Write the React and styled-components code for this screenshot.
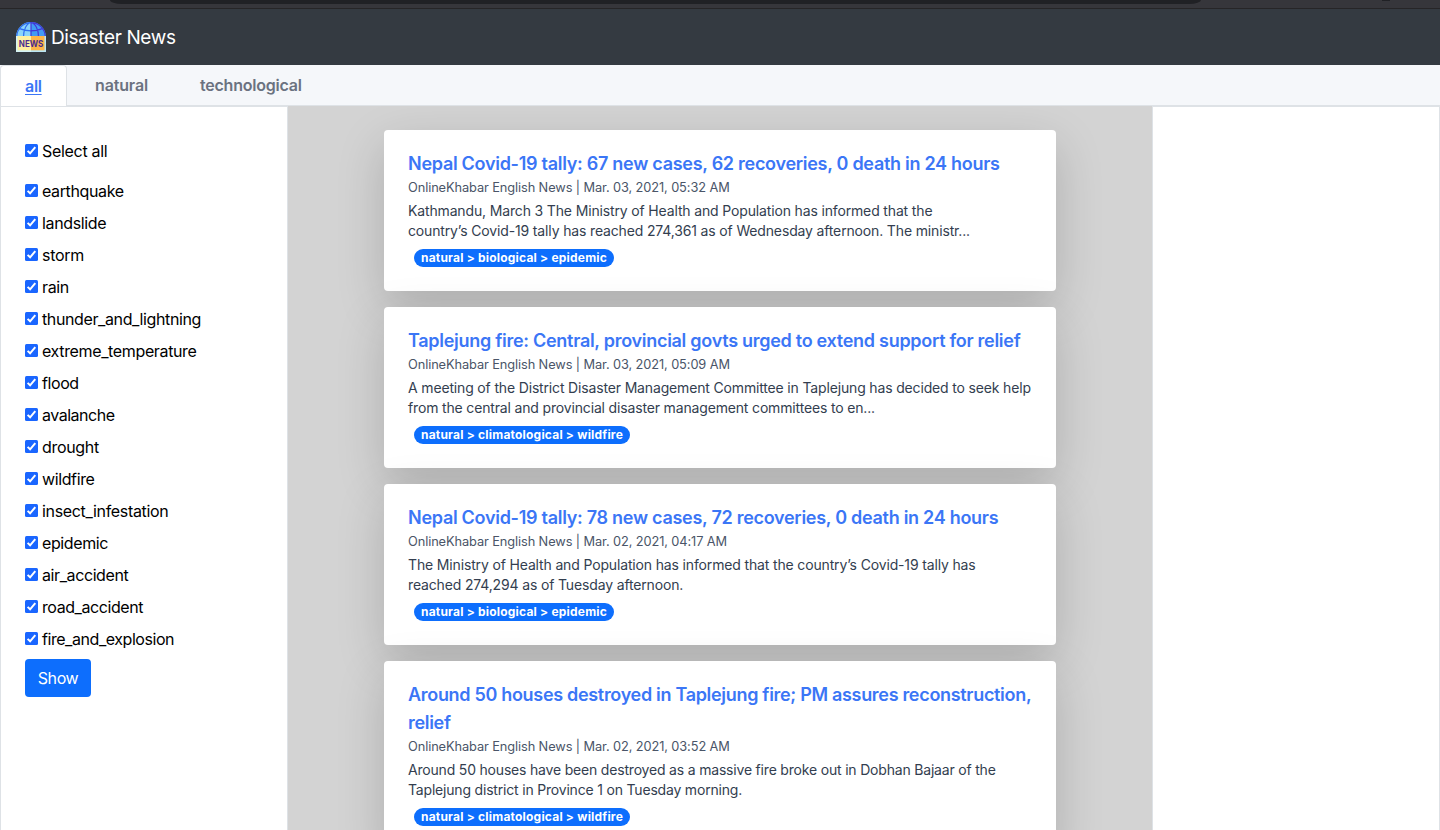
import React from "react";
import styled, { createGlobalStyle } from "styled-components";

const GlobalStyle = createGlobalStyle`
  *, *::before, *::after { box-sizing: border-box; }
  html, body { margin: 0; height: 100%; overflow: hidden; }
  body {
    font-family: Inter, "Liberation Sans", sans-serif;
    font-size: 16px;
    color: #000;
    background: #fff;
  }
`;

const Page = styled.div`
  display: flex;
  flex-direction: column;
  height: 830px;
  overflow: hidden;
`;

const BrowserStrip = styled.div`
  flex: none;
  display: flex;
  align-items: flex-start;
  justify-content: space-between;
  height: 9px;
  padding: 0 50px 0 110px;
  background: #36363b;
  border-bottom: 1px solid #262527;
`;

const AddressBar = styled.div`
  width: 1091px;
  height: 4px;
  background: #202125;
  border-radius: 0 0 12px 12px / 0 0 4px 4px;
`;

const ToolbarIconEdge = styled.div`
  width: 8px;
  height: 1px;
  background: #202125;
`;

const Navbar = styled.header`
  flex: none;
  display: flex;
  align-items: center;
  gap: 5px;
  height: 56px;
  padding: 0 16px;
  background: #343a41;
`;

const Brand = styled.span`
  color: #fff;
  font-size: 19px;
  letter-spacing: ${(p) => p.$ls};
  white-space: nowrap;
`;

const Tabs = styled.nav`
  flex: none;
  display: flex;
  height: 41px;
  background: #f5f7fa;
  border-bottom: 1px solid #dee2e6;
`;

const Tab = styled.a`
  display: flex;
  align-items: center;
  height: 40px;
  padding: 0 26px;
  color: #6b7280;
  font-size: 16px;
  font-weight: 600;
  white-space: nowrap;
  letter-spacing: ${(p) => p.$ls};
`;

const ActiveTab = styled(Tab)`
  width: 67px;
  height: 41px;
  margin-right: 2px;
  padding: 0 24px;
  color: #3b76f6;
  text-decoration: underline;
  text-underline-offset: 2px;
  background: #fff;
  border: 1px solid #dee2e6;
  border-bottom: 0;
  border-radius: 4px 4px 0 0;
`;

const Body = styled.main`
  flex: 1;
  min-height: 0;
  display: grid;
  grid-template-columns: 288px 864px 288px;
`;

const Side = styled.aside`
  padding: 28px 24px;
  background: #fff;
  border: 1px solid #dee2e6;
  border-bottom: 0;
`;

const Feed = styled.section`
  display: flex;
  flex-direction: column;
  gap: 16px;
  padding: 24px 96px;
  background: #d3d3d3;
  overflow: hidden;
`;

const Check = styled.label`
  display: flex;
  align-items: center;
  gap: 4px;
  height: 32px;
  margin-bottom: ${(p) => (p.$first ? "8px" : 0)};
  white-space: nowrap;
  letter-spacing: ${(p) => p.$ls};
`;

const Box = styled.svg`
  flex: none;
  display: block;
  width: 13px;
  height: 13px;
  margin-bottom: 2px;
`;

const ShowButton = styled.button`
  display: block;
  width: 66px;
  height: 38px;
  margin-top: 4px;
  padding: 0;
  color: #fff;
  font: 400 16px Inter, sans-serif;
  letter-spacing: -0.4px;
  background: #0d6efd;
  border: 0;
  border-radius: 4px;
`;

const Card = styled.article`
  flex: none;
  min-height: 161px;
  padding: 20px 24px 24px;
  background: #fff;
  border-radius: 4px;
  box-shadow: 0 16px 48px rgba(0, 0, 0, 0.175);
`;

const Title = styled.h2`
  margin: 0;
  color: #3b76f6;
  font-size: 18px;
  font-weight: 600;
  line-height: 28px;
  letter-spacing: ${(p) => p.$ls};
  white-space: nowrap;
`;

const Meta = styled.p`
  margin: 0;
  color: #4a5568;
  font-size: 12.8px;
  line-height: 19px;
  letter-spacing: ${(p) => p.$ls};
  white-space: nowrap;
`;

const Text = styled.p`
  margin: 4px 0 8px;
  color: #333e4f;
  font-size: 14px;
  line-height: 20px;
  letter-spacing: ${(p) => p.$ls};
  white-space: nowrap;
`;

const Badge = styled.span`
  display: flex;
  align-items: center;
  justify-content: center;
  width: ${(p) => p.$width}px;
  height: 18px;
  margin-left: 6px;
  padding-bottom: 2px;
  color: #fff;
  font-size: 12px;
  font-weight: 700;
  letter-spacing: ${(p) => p.$ls};
  white-space: nowrap;
  background: #0d6efd;
  border-radius: 9px;
`;

const LogoText = styled.text`
  font: 700 9.2px Inter, sans-serif;
  fill: #4a2d92;
`;

const Logo = () => (
  <svg width="30" height="30" viewBox="0 0 30 30" aria-hidden="true">
    <path d="M0 15A15 15 0 0 1 15 0V15Z" fill="#8ad4fb" />
    <path d="M15 0A15 15 0 0 1 30 15H15Z" fill="#429cf4" />
    <g fill="none" strokeWidth="1.2">
      <path d="M.7 15A14.3 14.3 0 0 1 15 .7M7.5 15C7.5 8 10.5 1 15 .7M3.5 6.6Q9 8.8 15 8.8" stroke="#2e6df0" />
      <path d="M15 .7A14.3 14.3 0 0 1 29.3 15M22.5 15C22.5 8 19.5 1 15 .7M15 8.8Q21 8.8 26.5 6.6M15 0V15" stroke="#4338d6" />
    </g>
    <path d="M0 14H15V30H0Z" fill="#d4f2f6" />
    <path d="M15 14H30V30H15Z" fill="#b9e4f2" />
    <path d="M1.5 14H15V28.3H1.5Z" fill="#fff0a0" />
    <path d="M15 14H28.5V28.3H15Z" fill="#ffb548" />
    <LogoText x="2.8" y="25.3" textLength="24.5" lengthAdjust="spacingAndGlyphs">NEWS</LogoText>
  </svg>
);

const CheckBox = () => (
  <Box viewBox="0 0 13 13" aria-hidden="true">
    <rect width="13" height="13" rx="1.5" fill="#1a66ff" />
    <path d="M2.6 6.9 5.1 9.3 10.3 3.2" fill="none" stroke="#fff" strokeWidth="2" />
  </Box>
);

const categories = [
  ["Select all", "-0.3px"],
  ["earthquake", "-0.38px"],
  ["landslide", "-0.36px"],
  ["storm", "-0.3px"],
  ["rain", "-0.35px"],
  ["thunder_and_lightning", "-0.38px"],
  ["extreme_temperature", "-0.36px"],
  ["flood", "-0.42px"],
  ["avalanche", "-0.48px"],
  ["drought", "-0.32px"],
  ["wildfire", "-0.38px"],
  ["insect_infestation", "-0.33px"],
  ["epidemic", "-0.38px"],
  ["air_accident", "-0.4px"],
  ["road_accident", "-0.42px"],
  ["fire_and_explosion", "-0.44px"],
];

const news = [
  {
    title: ["Nepal Covid-19 tally: 67 new cases, 62 recoveries, 0 death in 24 hours"],
    date: "Mar. 03, 2021, 05:32 AM",
    text: [
      "Kathmandu, March 3 The Ministry of Health and Population has informed that the",
      "country’s Covid-19 tally has reached 274,361 as of Wednesday afternoon. The ministr...",
    ],
    tag: "natural > biological > epidemic",
    width: 200,
    titleLs: "-0.28px",
    textLs: "-0.15px",
  },
  {
    title: ["Taplejung fire: Central, provincial govts urged to extend support for relief"],
    date: "Mar. 03, 2021, 05:09 AM",
    text: [
      "A meeting of the District Disaster Management Committee in Taplejung has decided to seek help",
      "from the central and provincial disaster management committees to en...",
    ],
    tag: "natural > climatological > wildfire",
    width: 216,
    titleLs: "-0.28px",
    textLs: "-0.16px",
  },
  {
    title: ["Nepal Covid-19 tally: 78 new cases, 72 recoveries, 0 death in 24 hours"],
    date: "Mar. 02, 2021, 04:17 AM",
    text: [
      "The Ministry of Health and Population has informed that the country’s Covid-19 tally has",
      "reached 274,294 as of Tuesday afternoon.",
    ],
    tag: "natural > biological > epidemic",
    width: 200,
    titleLs: "-0.28px",
    textLs: "-0.15px",
  },
  {
    title: ["Around 50 houses destroyed in Taplejung fire; PM assures reconstruction,", "relief"],
    date: "Mar. 02, 2021, 03:52 AM",
    text: [
      "Around 50 houses have been destroyed as a massive fire broke out in Dobhan Bajaar of the",
      "Taplejung district in Province 1 on Tuesday morning.",
    ],
    tag: "natural > climatological > wildfire",
    width: 216,
    titleLs: "-0.31px",
    textLs: "-0.19px",
  },
];

const lines = (parts) =>
  parts.map((part, i) => (
    <React.Fragment key={part}>
      {i > 0 && <br />}
      {part}
    </React.Fragment>
  ));

export default function App() {
  return (
    <Page>
      <GlobalStyle />
      <BrowserStrip>
        <AddressBar />
        <ToolbarIconEdge />
      </BrowserStrip>
      <Navbar>
        <Logo />
        <Brand $ls="-0.36px">Disaster News</Brand>
      </Navbar>
      <Tabs>
        <ActiveTab $ls="-0.3px">all</ActiveTab>
        <Tab $ls="-0.15px">natural</Tab>
        <Tab $ls="-0.22px">technological</Tab>
      </Tabs>
      <Body>
        <Side>
          {categories.map(([name, ls], i) => (
            <Check key={name} $first={i === 0} $ls={ls}>
              <CheckBox />
              {name}
            </Check>
          ))}
          <ShowButton>Show</ShowButton>
        </Side>
        <Feed>
          {news.map((item) => (
            <Card key={item.date}>
              <Title $ls={item.titleLs}>{lines(item.title)}</Title>
              <Meta $ls="-0.1px">OnlineKhabar English News | {item.date}</Meta>
              <Text $ls={item.textLs}>{lines(item.text)}</Text>
              <Badge $width={item.width} $ls="0.2px">{item.tag}</Badge>
            </Card>
          ))}
        </Feed>
        <Side />
      </Body>
    </Page>
  );
}
